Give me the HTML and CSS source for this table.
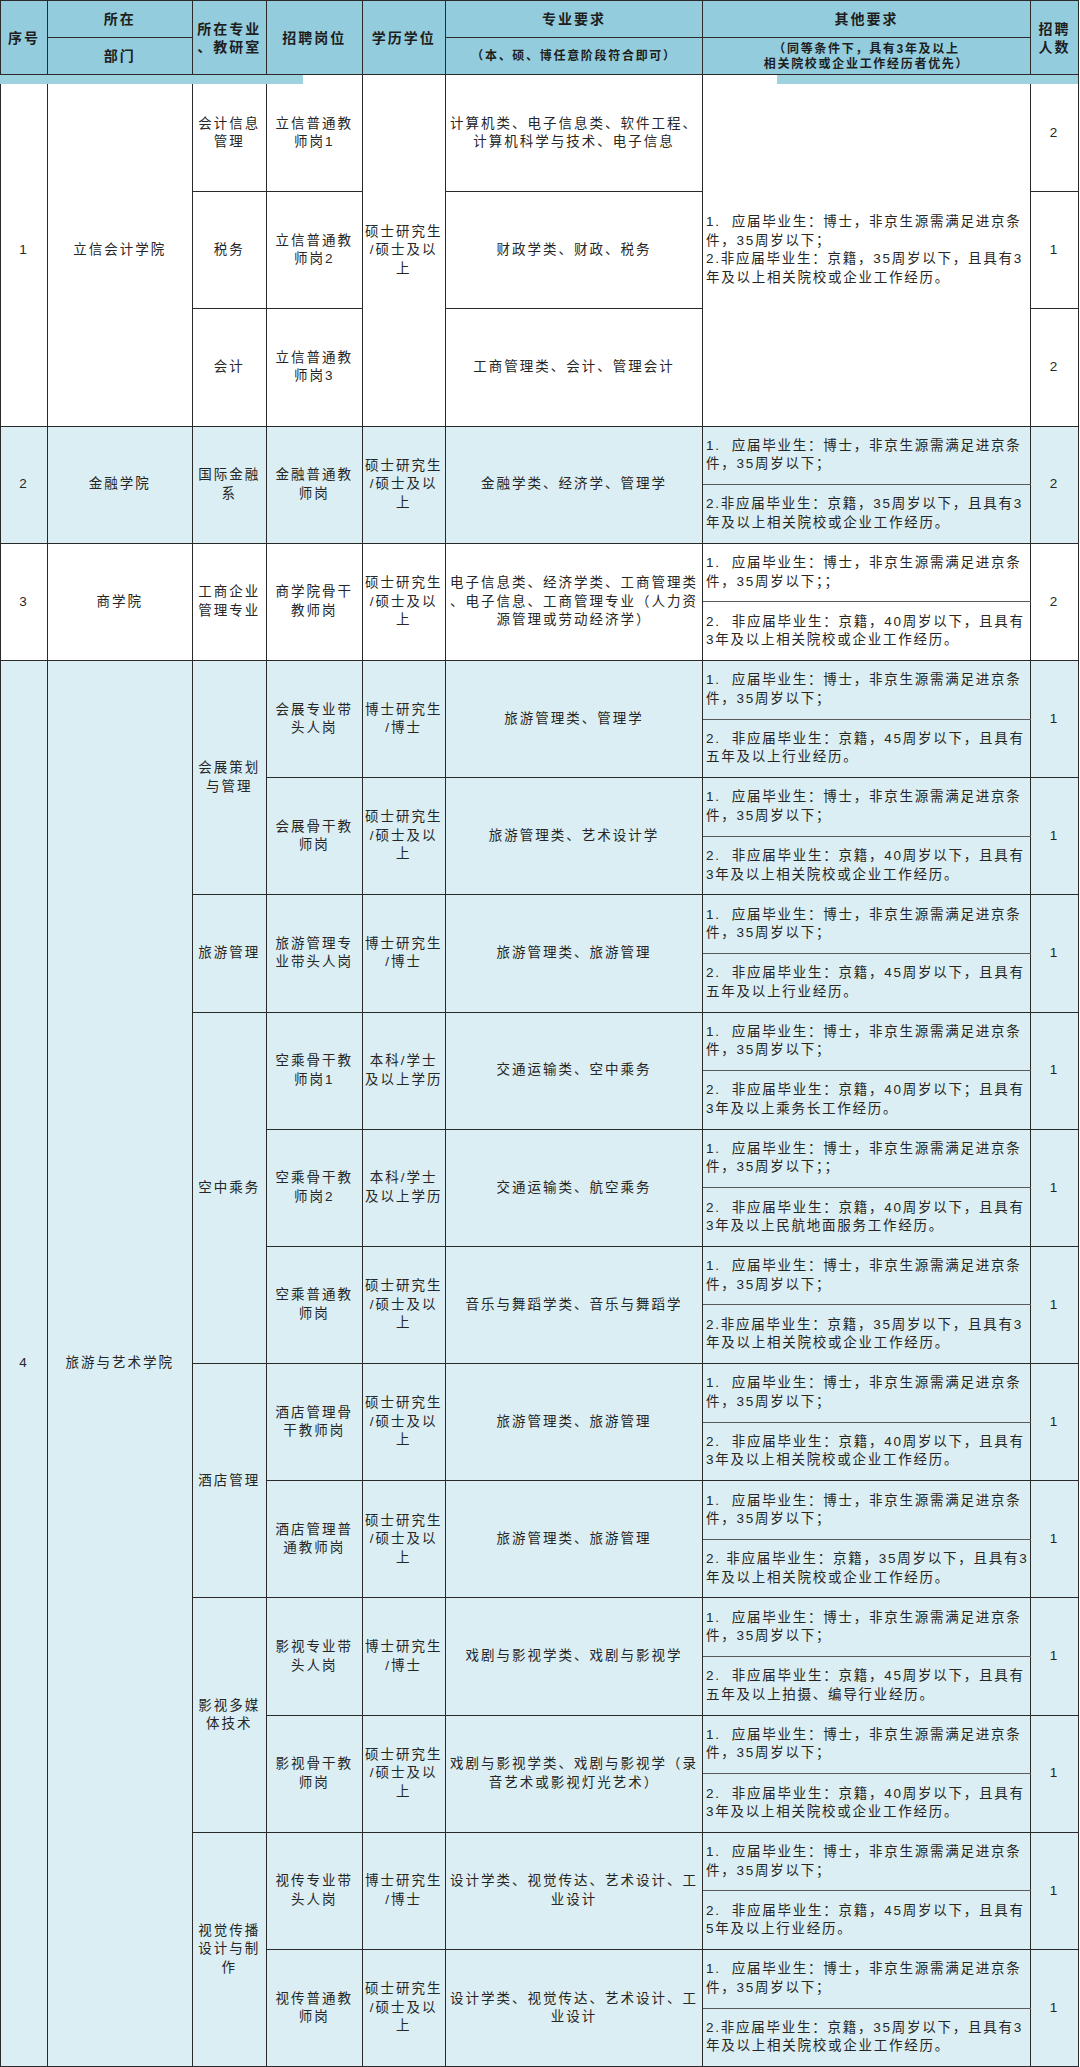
FILE: index.html
```html
<!DOCTYPE html>
<html lang="zh-CN">
<head>
<meta charset="utf-8">
<title>招聘计划表</title>
<link rel="stylesheet" href="styles.css">
</head>
<body>
<div class="sheet">
<table class="grid">
<colgroup>
<col class="c-no"><col class="c-dept"><col class="c-major"><col class="c-post"><col class="c-degree"><col class="c-req"><col class="c-other"><col class="c-num">
</colgroup>
<thead>
<tr class="h1">
<th rowspan="2">序号</th>
<th class="top">所在</th>
<th rowspan="2">所在专业<br>、教研室</th>
<th rowspan="2">招聘岗位</th>
<th rowspan="2">学历学位</th>
<th class="top">专业要求</th>
<th class="top">其他要求</th>
<th rowspan="2" class="num-h">招聘<br>人数</th>
</tr>
<tr class="h2">
<th>部门</th>
<th class="sub">（本、硕、博任意阶段符合即可）</th>
<th class="sub small">（同等条件下，具有3年及以上<br>相关院校或企业工作经历者优先）</th>
</tr>
</thead>
<tbody class="white">
<tr>
<td rowspan="6">1</td>
<td rowspan="6">立信会计学院</td>
<td rowspan="2">会计信息<br>管理</td>
<td rowspan="2">立信普通教<br>师岗1</td>
<td rowspan="6">硕士研究生<br>/硕士及以<br>上</td>
<td rowspan="2">计算机类、电子信息类、软件工程、<br>计算机科学与技术、电子信息</td>
<td rowspan="6" class="other">1.&nbsp; 应届毕业生：博士，非京生源需满足进京条<br>件，35周岁以下；<br>2.非应届毕业生：京籍，35周岁以下，且具有3<br>年及以上相关院校或企业工作经历。</td>
<td rowspan="2">2</td>
</tr>
<tr></tr>
<tr>
<td rowspan="2">税务</td>
<td rowspan="2">立信普通教<br>师岗2</td>
<td rowspan="2">财政学类、财政、税务</td>
<td rowspan="2">1</td>
</tr>
<tr></tr>
<tr>
<td rowspan="2">会计</td>
<td rowspan="2">立信普通教<br>师岗3</td>
<td rowspan="2">工商管理类、会计、管理会计</td>
<td rowspan="2">2</td>
</tr>
<tr></tr>
</tbody>
<tbody class="blue">
<tr>
<td rowspan="2">2</td>
<td rowspan="2">金融学院</td>
<td rowspan="2">国际金融<br>系</td>
<td rowspan="2">金融普通教<br>师岗</td>
<td rowspan="2">硕士研究生<br>/硕士及以<br>上</td>
<td rowspan="2">金融学类、经济学、管理学</td>
<td class="other s1">1.&nbsp; 应届毕业生：博士，非京生源需满足进京条<br>件，35周岁以下；</td>
<td rowspan="2">2</td>
</tr>
<tr><td class="other s2">2.非应届毕业生：京籍，35周岁以下，且具有3<br>年及以上相关院校或企业工作经历。</td></tr>
</tbody>
<tbody class="white">
<tr>
<td rowspan="2">3</td>
<td rowspan="2">商学院</td>
<td rowspan="2">工商企业<br>管理专业</td>
<td rowspan="2">商学院骨干<br>教师岗</td>
<td rowspan="2">硕士研究生<br>/硕士及以<br>上</td>
<td rowspan="2">电子信息类、经济学类、工商管理类<br>、电子信息、工商管理专业（人力资<br>源管理或劳动经济学）</td>
<td class="other s1">1.&nbsp; 应届毕业生：博士，非京生源需满足进京条<br>件，35周岁以下；；</td>
<td rowspan="2">2</td>
</tr>
<tr><td class="other s2">2.&nbsp; 非应届毕业生：京籍，40周岁以下，且具有<br>3年及以上相关院校或企业工作经历。</td></tr>
</tbody>
<tbody class="blue">
<tr>
<td rowspan="24">4</td>
<td rowspan="24">旅游与艺术学院</td>
<td rowspan="4">会展策划<br>与管理</td>
<td rowspan="2">会展专业带<br>头人岗</td>
<td rowspan="2">博士研究生<br>/博士</td>
<td rowspan="2">旅游管理类、管理学</td>
<td class="other s1">1.&nbsp; 应届毕业生：博士，非京生源需满足进京条<br>件，35周岁以下；</td>
<td rowspan="2">1</td>
</tr>
<tr><td class="other s2">2.&nbsp; 非应届毕业生：京籍，45周岁以下，且具有<br>五年及以上行业经历。</td></tr>
<tr>
<td rowspan="2">会展骨干教<br>师岗</td>
<td rowspan="2">硕士研究生<br>/硕士及以<br>上</td>
<td rowspan="2">旅游管理类、艺术设计学</td>
<td class="other s1">1.&nbsp; 应届毕业生：博士，非京生源需满足进京条<br>件，35周岁以下；</td>
<td rowspan="2">1</td>
</tr>
<tr><td class="other s2">2.&nbsp; 非应届毕业生：京籍，40周岁以下，且具有<br>3年及以上相关院校或企业工作经历。</td></tr>
<tr>
<td rowspan="2">旅游管理</td>
<td rowspan="2">旅游管理专<br>业带头人岗</td>
<td rowspan="2">博士研究生<br>/博士</td>
<td rowspan="2">旅游管理类、旅游管理</td>
<td class="other s1">1.&nbsp; 应届毕业生：博士，非京生源需满足进京条<br>件，35周岁以下；</td>
<td rowspan="2">1</td>
</tr>
<tr><td class="other s2">2.&nbsp; 非应届毕业生：京籍，45周岁以下，且具有<br>五年及以上行业经历。</td></tr>
<tr>
<td rowspan="6">空中乘务</td>
<td rowspan="2">空乘骨干教<br>师岗1</td>
<td rowspan="2">本科/学士<br>及以上学历</td>
<td rowspan="2">交通运输类、空中乘务</td>
<td class="other s1">1.&nbsp; 应届毕业生：博士，非京生源需满足进京条<br>件，35周岁以下；</td>
<td rowspan="2">1</td>
</tr>
<tr><td class="other s2">2.&nbsp; 非应届毕业生：京籍，40周岁以下；且具有<br>3年及以上乘务长工作经历。</td></tr>
<tr>
<td rowspan="2">空乘骨干教<br>师岗2</td>
<td rowspan="2">本科/学士<br>及以上学历</td>
<td rowspan="2">交通运输类、航空乘务</td>
<td class="other s1">1.&nbsp; 应届毕业生：博士，非京生源需满足进京条<br>件，35周岁以下；；</td>
<td rowspan="2">1</td>
</tr>
<tr><td class="other s2">2.&nbsp; 非应届毕业生：京籍，40周岁以下，且具有<br>3年及以上民航地面服务工作经历。</td></tr>
<tr>
<td rowspan="2">空乘普通教<br>师岗</td>
<td rowspan="2">硕士研究生<br>/硕士及以<br>上</td>
<td rowspan="2">音乐与舞蹈学类、音乐与舞蹈学</td>
<td class="other s1">1.&nbsp; 应届毕业生：博士，非京生源需满足进京条<br>件，35周岁以下；</td>
<td rowspan="2">1</td>
</tr>
<tr><td class="other s2">2.非应届毕业生：京籍，35周岁以下，且具有3<br>年及以上相关院校或企业工作经历。</td></tr>
<tr>
<td rowspan="4">酒店管理</td>
<td rowspan="2">酒店管理骨<br>干教师岗</td>
<td rowspan="2">硕士研究生<br>/硕士及以<br>上</td>
<td rowspan="2">旅游管理类、旅游管理</td>
<td class="other s1">1.&nbsp; 应届毕业生：博士，非京生源需满足进京条<br>件，35周岁以下；</td>
<td rowspan="2">1</td>
</tr>
<tr><td class="other s2">2.&nbsp; 非应届毕业生：京籍，40周岁以下，且具有<br>3年及以上相关院校或企业工作经历。</td></tr>
<tr>
<td rowspan="2">酒店管理普<br>通教师岗</td>
<td rowspan="2">硕士研究生<br>/硕士及以<br>上</td>
<td rowspan="2">旅游管理类、旅游管理</td>
<td class="other s1">1.&nbsp; 应届毕业生：博士，非京生源需满足进京条<br>件，35周岁以下；</td>
<td rowspan="2">1</td>
</tr>
<tr><td class="other s2">2. 非应届毕业生：京籍，35周岁以下，且具有3<br>年及以上相关院校或企业工作经历。</td></tr>
<tr>
<td rowspan="4">影视多媒<br>体技术</td>
<td rowspan="2">影视专业带<br>头人岗</td>
<td rowspan="2">博士研究生<br>/博士</td>
<td rowspan="2">戏剧与影视学类、戏剧与影视学</td>
<td class="other s1">1.&nbsp; 应届毕业生：博士，非京生源需满足进京条<br>件，35周岁以下；</td>
<td rowspan="2">1</td>
</tr>
<tr><td class="other s2">2.&nbsp; 非应届毕业生：京籍，45周岁以下，且具有<br>五年及以上拍摄、编导行业经历。</td></tr>
<tr>
<td rowspan="2">影视骨干教<br>师岗</td>
<td rowspan="2">硕士研究生<br>/硕士及以<br>上</td>
<td rowspan="2">戏剧与影视学类、戏剧与影视学（录<br>音艺术或影视灯光艺术）</td>
<td class="other s1">1.&nbsp; 应届毕业生：博士，非京生源需满足进京条<br>件，35周岁以下；</td>
<td rowspan="2">1</td>
</tr>
<tr><td class="other s2">2.&nbsp; 非应届毕业生：京籍，40周岁以下，且具有<br>3年及以上相关院校或企业工作经历。</td></tr>
<tr>
<td rowspan="4">视觉传播<br>设计与制<br>作</td>
<td rowspan="2">视传专业带<br>头人岗</td>
<td rowspan="2">博士研究生<br>/博士</td>
<td rowspan="2">设计学类、视觉传达、艺术设计、工<br>业设计</td>
<td class="other s1">1.&nbsp; 应届毕业生：博士，非京生源需满足进京条<br>件，35周岁以下；</td>
<td rowspan="2">1</td>
</tr>
<tr><td class="other s2">2.&nbsp; 非应届毕业生：京籍，45周岁以下，且具有<br>5年及以上行业经历。</td></tr>
<tr>
<td rowspan="2">视传普通教<br>师岗</td>
<td rowspan="2">硕士研究生<br>/硕士及以<br>上</td>
<td rowspan="2">设计学类、视觉传达、艺术设计、工<br>业设计</td>
<td class="other s1">1.&nbsp; 应届毕业生：博士，非京生源需满足进京条<br>件，35周岁以下；</td>
<td rowspan="2">1</td>
</tr>
<tr><td class="other s2">2.非应届毕业生：京籍，35周岁以下，且具有3<br>年及以上相关院校或企业工作经历。</td></tr>
</tbody>
</table>
<div class="smear smear-left"></div>
<div class="smear smear-right"></div>
</div>
</body>
</html>
```
FILE: styles.css
```css
html, body {
  margin: 0;
  padding: 0;
  background: #ffffff;
}
body {
  font-family: "Liberation Sans", "Noto Sans CJK SC", sans-serif;
  color: #262626;
}
.sheet {
  position: relative;
  width: 1080px;
}
.grid {
  border-collapse: collapse;
  table-layout: fixed;
  width: 1078px;
}
.c-no { width: 47px; }
.c-dept { width: 144.5px; }
.c-major { width: 74.5px; }
.c-post { width: 95.5px; }
.c-degree { width: 83.5px; }
.c-req { width: 257px; }
.c-other { width: 328px; }
.c-num { width: 48px; }

.grid th, .grid td {
  border: 1px solid #2a2a2a;
  padding: 0;
  text-align: center;
  vertical-align: middle;
  white-space: nowrap;
}
.grid th {
  background: #93cddd;
  color: #1e1e1e;
  font-weight: bold;
  font-size: 14px;
  letter-spacing: 2px;
  line-height: 18px;
}
.grid th.sub {
  font-size: 12px;
  letter-spacing: 1.7px;
  line-height: 15px;
}
.grid th.small {
  padding-top: 2px;
}
.grid .h1 { height: 37px; }
.grid .h2 { height: 37px; }
.grid tbody tr { height: 58.6px; }
.grid td {
  font-size: 13.5px;
  letter-spacing: 2px;
  line-height: 18.5px;
}
.grid td.other {
  text-align: left;
  padding-left: 3px;
  letter-spacing: 1.75px;
}
.grid td.s1 { border-bottom: 1px solid #5a5a5a; }
.grid td.s2 { border-top: 1px solid #5a5a5a; }
.white td { background: #ffffff; }
.blue td { background: #daeef3; }

.smear {
  position: absolute;
  top: 75px;
  height: 9px;
  background: #9fd2df;
  filter: blur(0.6px);
}
.smear-left { left: 0; width: 303px; }
.smear-right { left: 777px; width: 301px; }
```
